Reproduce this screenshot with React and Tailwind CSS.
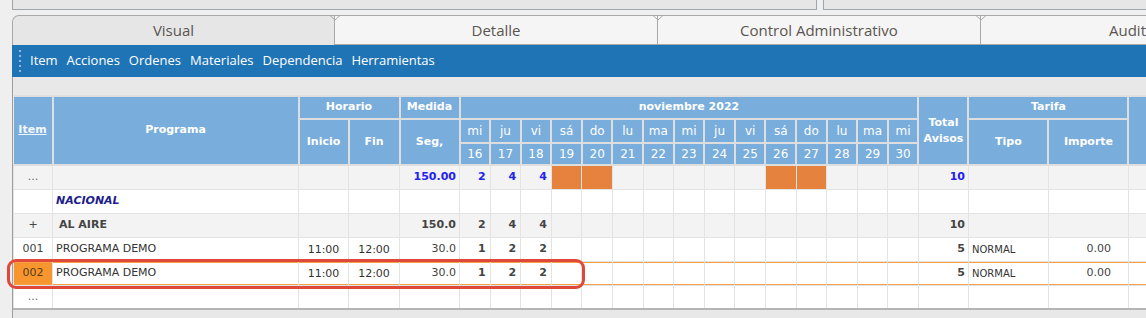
import React from "react";

const dayNames = ["mi","ju","vi","sá","do","lu","ma","mi","ju","vi","sá","do","lu","ma","mi"];
const dayNums = [16,17,18,19,20,21,22,23,24,25,26,27,28,29,30];
const weekend = [3,4,10,11];

const TABLE_FONT = { fontFamily: '"DejaVu Sans", Verdana, sans-serif' };

function Tab({ label, active, notch, align }) {
  return (
    <div
      className={
        "relative h-[30px] shrink-0 w-[323px] border-t border-[#a9a9a9] flex items-center text-[15px] text-[#5a5550] " +
        (active ? "bg-[#e6e6e6] border-l rounded-tl-[7px] " : "bg-[#f5f5f5] border-b ") +
        (align === "left" ? "justify-start pl-[128px] " : "justify-center ") +
        "border-r"
      }
    >
      {notch && (
        <svg className="absolute -left-[6px] -top-[1px]" width="12" height="8" viewBox="0 0 12 8">
          <path d="M1 0.5 L6 5 L11 0.5" fill="none" stroke="#a9a9a9" strokeWidth="1" />
        </svg>
      )}
      {label}
    </div>
  );
}

function HCell({ children, className = "", ...rest }) {
  return (
    <th
      {...rest}
      className={"bg-[#79addb] border-2 border-[#dedede] text-white font-bold text-[11px] p-0 text-center align-middle " + className}
    >
      {children}
    </th>
  );
}

function Row({ bg, highlight, item, itemClass = "", prog, progClass = "", ini, fin, med, medClass = "", days = [], dayClass = "", weekendFill, total, totalClass = "", tipo, imp }) {
  const hl = highlight ? "shadow-[inset_0_1px_0_#f6a04a,inset_0_-1px_0_#f6a04a] " : "";
  const cellBase = "h-[24px] p-0 border border-[#e3e3e3] " + hl;
  return (
    <tr className={bg}>
      <td className={cellBase + "text-center text-[11px] " + itemClass}>{item}</td>
      <td className={cellBase + "text-left text-[11px] pl-[3px] whitespace-nowrap " + progClass}>{prog}</td>
      <td className={cellBase + "text-center text-[11px] text-[#333] pt-[3px]"}>{ini}</td>
      <td className={cellBase + "text-center text-[11px] text-[#333] pt-[3px]"}>{fin}</td>
      <td className={cellBase + "text-right text-[11px] pr-[3px] " + medClass}>{med}</td>
      {dayNums.map((d, i) => {
        const isW = weekendFill && weekend.includes(i);
        return (
          <td key={d} className={cellBase + "text-right text-[11px] pr-[4px] " + dayClass + (isW ? " bg-[#e5823e]" : "")}>
            {days[i] ?? ""}
          </td>
        );
      })}
      <td className={cellBase + "text-right text-[11px] pr-[3px] " + totalClass}>{total}</td>
      <td className={cellBase + "text-left text-[10px] pl-[3px] text-[#333]"}>{tipo}</td>
      <td className={cellBase + "text-right text-[11px] pr-[17px] text-[#444]"}>{imp}</td>
      <td className={cellBase}></td>
    </tr>
  );
}

export default function App() {
  return (
    <div className="w-[1146px] h-[318px] overflow-hidden bg-[#efefef] relative" style={{ fontFamily: '"Open Sans", "Noto Sans", sans-serif' }}>
      {/* top panels */}
      <div className="flex h-[10px]">
        <div className="w-[12px] shrink-0"></div>
        <div className="w-[805px] shrink-0 bg-[#e6e6e6] border-x border-b border-[#9fa6ab]"></div>
        <div className="w-[6px] shrink-0"></div>
        <div className="flex-1 bg-[#e6e6e6] border-l border-b border-[#9fa6ab]"></div>
      </div>
      <div className="h-[5px]"></div>
      {/* tabs */}
      <div className="flex pl-[12px]">
        <Tab label="Visual" active />
        <Tab label="Detalle" notch />
        <Tab label="Control Administrativo" notch />
        <Tab label="Auditoría" notch align="left" />
      </div>
      {/* toolbar */}
      <div className="ml-[12px] h-[32px] bg-[#1f74b5] flex items-center text-white text-[13px]">
        <div className="flex flex-col gap-[3px] ml-[7px] mr-[9px]">
          {[0,1,2,3,4].map((i) => (
            <div key={i} className="w-[2px] h-[2px] bg-[#8db8dc]"></div>
          ))}
        </div>
        <div className="flex gap-[9px]">
          <span>Item</span>
          <span>Acciones</span>
          <span>Ordenes</span>
          <span>Materiales</span>
          <span>Dependencia</span>
          <span>Herramientas</span>
        </div>
      </div>
      {/* content */}
      <div className="ml-[12px] border-l border-[#9e9e9e] bg-[#e8e8e8] h-[241px] pt-[18px] overflow-hidden relative">
        <table className="table-fixed border-collapse w-[1175px]" style={TABLE_FONT}>
          <colgroup>
            <col className="w-[39px]" />
            <col className="w-[246px]" />
            <col className="w-[50px]" />
            <col className="w-[51px]" />
            <col className="w-[60px]" />
            {dayNums.map((d) => (
              <col key={d} className="w-[30.6px]" />
            ))}
            <col className="w-[50px]" />
            <col className="w-[80px]" />
            <col className="w-[80px]" />
            <col className="w-[60px]" />
          </colgroup>
          <thead>
            <tr className="h-[23px]">
              <HCell rowSpan={3} className="border-l-0"><span className="underline text-[#f2f7fc]">Item</span></HCell>
              <HCell rowSpan={3}>Programa</HCell>
              <HCell colSpan={2}>Horario</HCell>
              <HCell>Medida</HCell>
              <HCell colSpan={15}>noviembre 2022</HCell>
              <HCell rowSpan={3} className="leading-[16px]">Total<br />Avisos</HCell>
              <HCell colSpan={2}>Tarifa</HCell>
              <HCell rowSpan={3}></HCell>
            </tr>
            <tr className="h-[24px]">
              <HCell rowSpan={2}>Inicio</HCell>
              <HCell rowSpan={2}>Fin</HCell>
              <HCell rowSpan={2}>Seg,</HCell>
              {dayNames.map((n, i) => (
                <HCell key={i} className="font-normal text-[12px]">{n}</HCell>
              ))}
              <HCell rowSpan={2}>Tipo</HCell>
              <HCell rowSpan={2}>Importe</HCell>
            </tr>
            <tr className="h-[22px]">
              {dayNums.map((n) => (
                <HCell key={n} className="font-normal text-[12px]">{n}</HCell>
              ))}
            </tr>
          </thead>
          <tbody className="border-t-2 border-[#a8a8a8] border-b-2 border-b-[#b4b4b4]">
            <Row
              bg="bg-[#f3f3f3]"
              item="..."
              itemClass="text-[#666]"
              med="150.00"
              medClass="text-[#2222ee] font-bold"
              days={[2, 4, 4]}
              dayClass="text-[#2222ee] font-bold"
              weekendFill
              total="10"
              totalClass="text-[#2222ee] font-bold"
            />
            <Row
              bg="bg-white"
              prog="NACIONAL"
              progClass="text-[10px] italic font-bold text-[#1e1e8c]"
            />
            <Row
              bg="bg-[#f3f3f3]"
              item="+"
              itemClass="text-[#444]"
              prog={<span className="pl-[3px]">AL AIRE</span>}
              progClass="font-bold text-[#444]"
              med="150.0"
              medClass="font-bold text-[#444]"
              days={[2, 4, 4]}
              dayClass="font-bold text-[#444]"
              total="10"
              totalClass="font-bold text-[#444]"
            />
            <Row
              bg="bg-white"
              item="001"
              itemClass="text-[#444]"
              prog="PROGRAMA DEMO"
              progClass="text-[#333]"
              ini="11:00"
              fin="12:00"
              med="30.0"
              medClass="text-[#444]"
              days={[1, 2, 2]}
              dayClass="font-bold text-[#444]"
              total="5"
              totalClass="font-bold text-[#444]"
              tipo="NORMAL"
              imp="0.00"
            />
            <Row
              bg="bg-white"
              highlight
              item="002"
              itemClass="bg-[#f7962e] text-[#5a3b1c]"
              prog="PROGRAMA DEMO"
              progClass="text-[#333]"
              ini="11:00"
              fin="12:00"
              med="30.0"
              medClass="text-[#444]"
              days={[1, 2, 2]}
              dayClass="font-bold text-[#444]"
              total="5"
              totalClass="font-bold text-[#444]"
              tipo="NORMAL"
              imp="0.00"
            />
            <Row bg="bg-white" item="..." itemClass="text-[#666]" />
          </tbody>
        </table>
      </div>
      {/* highlight outline */}
      <div className="absolute left-[7px] top-[259px] w-[578px] h-[30px] border-[3px] border-[#e0483a] rounded-[9px] pointer-events-none"></div>
    </div>
  );
}
